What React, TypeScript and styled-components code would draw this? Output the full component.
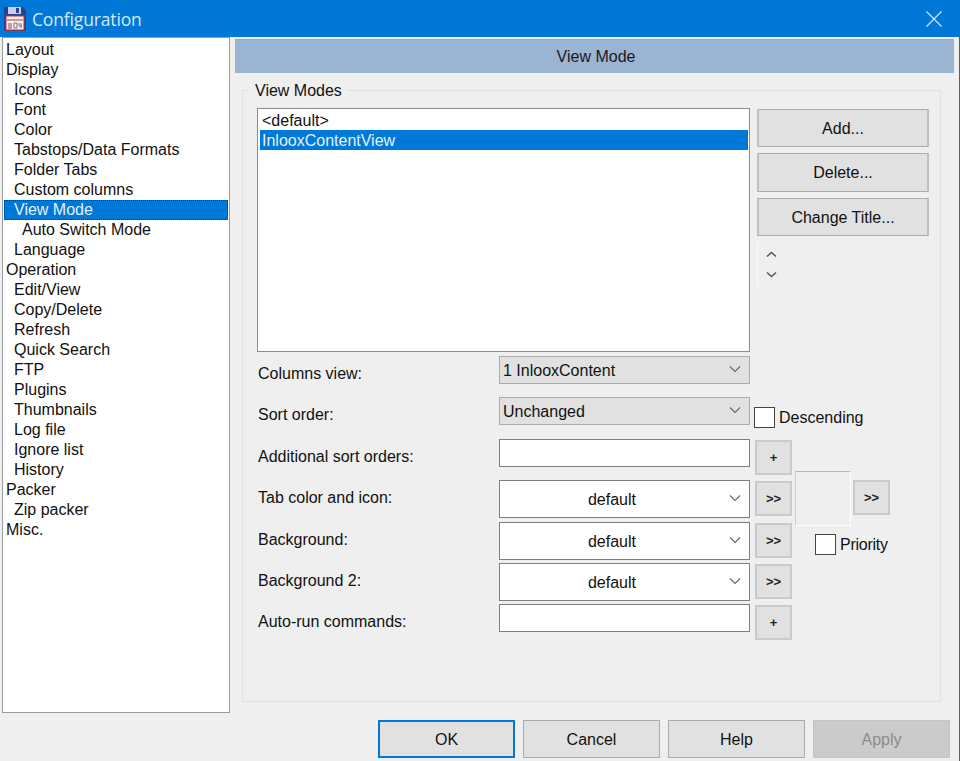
import React from 'react';
import styled, { createGlobalStyle } from 'styled-components';

const Global = createGlobalStyle`
  html, body { margin: 0; padding: 0; background: #efefef; }
  body { font-family: "Liberation Sans", Arial, sans-serif; font-size: 16px; color: #111; }
  * { box-sizing: border-box; }
`;

const Window = styled.div`
  width: 960px; height: 761px; overflow: hidden; background: #efefef;
  border-right: 1px solid #0078d7;
  display: flex; flex-direction: column;
`;
const TitleBar = styled.div`
  height: 37px; flex: none; background: #0078d7; color: #d6e9f8;
  display: flex; align-items: center; padding: 0 17px 0 3px;
`;
const Title = styled.div`
  font-family: "Open Sans", sans-serif; font-size: 17.5px; margin-left: 5px; flex: 1; letter-spacing: -0.15px;
`;
const Body = styled.div`
  flex: none; height: 677px; display: flex; padding-left: 2px;
`;
const Tree = styled.div`
  width: 228px; height: 676px; background: #fff;
  border: 1px solid #9a9aa0; padding: 2px 1px 2px 1px;
  flex: none;
`;
const TreeRow = styled.div<{ $level: number; $selected?: boolean }>`
  height: 20px; line-height: 20px; white-space: nowrap;
  padding-left: ${p => p.$level * 8 + 2}px;
  ${p => p.$selected ? 'background: #0078d7; color: #e4f1fb; outline: 1px dotted #0a3a66; outline-offset: -1px;' : ''}
`;
const RightPane = styled.div`
  margin-left: 5px; width: 719px; flex: none; display: flex; flex-direction: column;
`;
const Header = styled.div`
  margin-top: 2px; height: 34px; background: #9bb4d1; border-top: 1px solid #a8a8a8;
  display: flex; align-items: center; justify-content: center; color: #1a1a1a; padding-left: 3px;
`;
const Group = styled.div`
  position: relative; margin: 17px 0 0 7px; width: 699px; height: 612px;
  border: 1px solid #e0e0e0; padding: 17px 0 0 14px;
`;
const Legend = styled.div`
  position: absolute; left: 7px; top: -10px; height: 20px; line-height: 20px;
  padding: 0 5px; background: #efefef;
`;
const TopArea = styled.div`
  display: flex; align-items: flex-start;
`;
const ListBox = styled.div`
  width: 493px; height: 244px; background: #fff; border: 1px solid #8c8c8c; padding: 1px 1px 0 2px;
`;
const ListRow = styled.div<{ $selected?: boolean }>`
  height: 20px; line-height: 21px; padding-left: 2px;
  ${p => p.$selected ? 'background: #0078d7; color: #e4f1fb;' : ''}
`;
const SideColumn = styled.div`
  margin-left: 7px; margin-top: 1px; width: 172px; display: flex; flex-direction: column;
`;
const Button = styled.button<{ $primary?: boolean; $disabled?: boolean }>`
  font: inherit; color: ${p => p.$disabled ? '#8c8c8c' : '#111'};
  background: ${p => p.$disabled ? '#cbcbcb' : '#e1e1e1'};
  border: ${p => p.$primary ? '2px solid #0078d7' : p.$disabled ? '1px solid #c4c4c4' : '1px solid #adadad'};
  padding: 1px 0 0; display: flex; align-items: center; justify-content: center;
`;
const SideButton = styled(Button)<{ $height?: number }>`
  height: ${p => p.$height ?? 38}px; width: 172px; margin-bottom: 6px; border: 2px solid #c0c0c0; border-top: 1px solid #adadad; border-bottom: 1px solid #adadad;
`;
const Spinner = styled.div`
  margin-top: -1px; width: 27px; height: 46px; border-left: 1px solid #f8f8f8;
  display: flex; flex-direction: column; align-items: center; justify-content: center; gap: 13px; color: #555;
`;
const FormGrid = styled.div`
  margin-top: 4px;
  display: grid;
  grid-template-columns: 242px 251px 5px 37px auto;
  grid-template-rows: 41px 42px 41px 42px 41px 41px 36px;
`;
const Label = styled.div<{ $row: number }>`
  grid-column: 1; grid-row: ${p => p.$row}; padding-left: 1px; margin-top: 8px; height: 20px; line-height: 20px; white-space: nowrap;
`;
const Control = styled.div<{ $row: number; $tall?: boolean; $grey?: boolean; $center?: boolean }>`
  grid-column: 2; grid-row: ${p => p.$row};
  height: ${p => p.$tall ? 38 : 28}px; position: relative;
  background: ${p => p.$grey ? '#e1e1e1' : '#fff'};
  border: 1px solid ${p => p.$grey ? '#adadad' : '#7f7f7f'};
  display: flex; align-items: center;
  justify-content: ${p => p.$center ? 'center' : 'flex-start'};
  padding: ${p => p.$center ? '1px 25px 0 0' : '1px 0 0 3px'};
`;
const Chevron = styled.svg`
  position: absolute; right: 8px; top: 50%; margin-top: -5px; width: 12px; height: 8px;
`;
const SmallButton = styled(Button)<{ $row: number }>`
  grid-column: 4; grid-row: ${p => p.$row}; margin-top: 1px; padding: 0;
  width: 37px; height: 35px; font-size: 13px; font-weight: 700; border-color: #cacaca; border-width: 2px; color: #222;
`;
const CheckRow = styled.label`
  display: flex; align-items: center; height: 21px; white-space: nowrap;
`;
const CheckBox = styled.span`
  display: block; width: 21px; height: 21px; background: #fff; border: 1px solid #444; margin-right: 4px; flex: none;
`;
const DescendingSlot = styled.div`
  grid-column: 3 / span 3; grid-row: 2; margin-top: 10px; margin-left: 4px;
`;
const PreviewCluster = styled.div`
  grid-column: 5; grid-row: 3 / span 4; padding: 32px 0 0 3px;
`;
const PreviewRow = styled.div`
  display: flex; align-items: flex-start;
`;
const Preview = styled.div`
  width: 56px; height: 55px; border: 1px solid; border-color: #b8b8b8 #fff #fff #d0d0d0; flex: none;
`;
const PreviewButton = styled(SmallButton)`
  margin: 9px 0 0 2px; flex: none;
`;
const PrioritySlot = styled.div`
  margin: 7px 0 0 20px; letter-spacing: -0.25px; padding-top: 1px;
`;
const Footer = styled.div`
  flex: none; margin-top: 6px; display: flex; justify-content: flex-end; gap: 8px; padding-right: 9px;
`;
const FooterButton = styled(Button)`
  width: 137px; height: 38px;
`;

const tree: [string, number, boolean?][] = [
  ['Layout', 0], ['Display', 0], ['Icons', 1], ['Font', 1], ['Color', 1], ['Tabstops/Data Formats', 1],
  ['Folder Tabs', 1], ['Custom columns', 1], ['View Mode', 1, true], ['Auto Switch Mode', 2], ['Language', 1],
  ['Operation', 0], ['Edit/View', 1], ['Copy/Delete', 1], ['Refresh', 1], ['Quick Search', 1], ['FTP', 1],
  ['Plugins', 1], ['Thumbnails', 1], ['Log file', 1], ['Ignore list', 1], ['History', 1], ['Packer', 0],
  ['Zip packer', 1], ['Misc.', 0],
];

const Arrow = () => (
  <Chevron viewBox="0 0 12 8"><path d="M1 1.5 L6 6.5 L11 1.5" fill="none" stroke="#666" strokeWidth="1.1" /></Chevron>
);

const Floppy = () => (
  <svg width="24" height="26" viewBox="0 0 24 26">
    <path d="M1 1 H20 L23 4 V25 H1 Z" fill="#2c3f8f" />
    <rect x="5" y="1" width="13" height="7" fill="#c9cfe6" />
    <rect x="13" y="2" width="3" height="5" fill="#2c3f8f" />
    <rect x="3" y="10" width="18" height="14" fill="#f2f2f2" stroke="#c2303c" strokeWidth="1" />
    <path d="M4 14 H20" stroke="#c2303c" strokeWidth="1" />
    <path d="M5 18 H9 M5 20 H9 M5 22 H9" stroke="#c2303c" strokeWidth="1" />
    <path d="M11 17 H14 V22 H11 Z M16 17 V20 H19 M18 17 V22" fill="none" stroke="#777" strokeWidth="1" />
  </svg>
);

const App = () => (
  <Window>
    <Global />
    <TitleBar>
      <Floppy />
      <Title>Configuration</Title>
      <svg width="16" height="16" viewBox="0 0 16 16"><path d="M0.5 0.5 L15.5 15.5 M15.5 0.5 L0.5 15.5" stroke="#d6e9f8" strokeWidth="1.1" /></svg>
    </TitleBar>
    <Body>
      <Tree>
        {tree.map(([t, l, s]) => <TreeRow key={t} $level={l} $selected={s}>{t}</TreeRow>)}
      </Tree>
      <RightPane>
        <Header>View Mode</Header>
        <Group>
          <Legend>View Modes</Legend>
          <TopArea>
            <ListBox>
              <ListRow>&lt;default&gt;</ListRow>
              <ListRow $selected>InlooxContentView</ListRow>
            </ListBox>
            <SideColumn>
              <SideButton>Add...</SideButton>
              <SideButton $height={39}>Delete...</SideButton>
              <SideButton>Change Title...</SideButton>
              <Spinner>
                <svg width="11" height="7" viewBox="0 0 11 7"><path d="M1 5.5 L5.5 1.5 L10 5.5" fill="none" stroke="currentColor" strokeWidth="1.5" /></svg>
                <svg width="11" height="7" viewBox="0 0 11 7"><path d="M1 1.5 L5.5 5.5 L10 1.5" fill="none" stroke="currentColor" strokeWidth="1.5" /></svg>
              </Spinner>
            </SideColumn>
          </TopArea>
          <FormGrid>
            <Label $row={1}>Columns view:</Label>
            <Control $row={1} $grey>1 InlooxContent<Arrow /></Control>
            <Label $row={2}>Sort order:</Label>
            <Control $row={2} $grey>Unchanged<Arrow /></Control>
            <DescendingSlot><CheckRow><CheckBox />Descending</CheckRow></DescendingSlot>
            <Label $row={3}>Additional sort orders:</Label>
            <Control $row={3} />
            <SmallButton $row={3}>+</SmallButton>
            <Label $row={4}>Tab color and icon:</Label>
            <Control $row={4} $tall $center>default<Arrow /></Control>
            <SmallButton $row={4}>&gt;&gt;</SmallButton>
            <Label $row={5}>Background:</Label>
            <Control $row={5} $tall $center>default<Arrow /></Control>
            <SmallButton $row={5}>&gt;&gt;</SmallButton>
            <Label $row={6}>Background 2:</Label>
            <Control $row={6} $tall $center>default<Arrow /></Control>
            <SmallButton $row={6}>&gt;&gt;</SmallButton>
            <Label $row={7}>Auto-run commands:</Label>
            <Control $row={7} />
            <SmallButton $row={7}>+</SmallButton>
            <PreviewCluster>
              <PreviewRow>
                <Preview />
                <PreviewButton $row={1}>&gt;&gt;</PreviewButton>
              </PreviewRow>
              <PrioritySlot><CheckRow><CheckBox />Priority</CheckRow></PrioritySlot>
            </PreviewCluster>
          </FormGrid>
        </Group>
      </RightPane>
    </Body>
    <Footer>
      <FooterButton $primary>OK</FooterButton>
      <FooterButton>Cancel</FooterButton>
      <FooterButton>Help</FooterButton>
      <FooterButton $disabled>Apply</FooterButton>
    </Footer>
  </Window>
);

export default App;
